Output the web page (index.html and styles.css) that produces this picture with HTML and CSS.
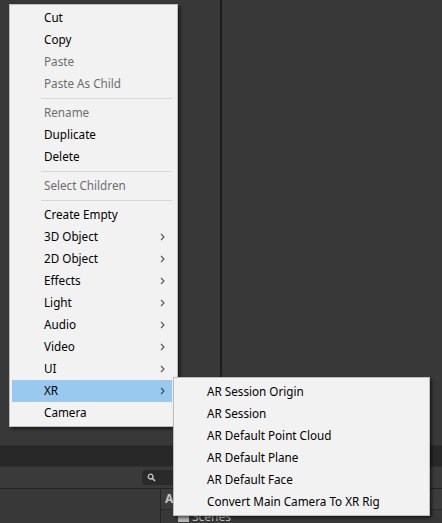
FILE: index.html
```html
<!DOCTYPE html>
<html>
<head>
<meta charset="utf-8">
<link rel="stylesheet" href="styles.css">
</head>
<body>
<div class="editor">
  <div class="top">
    <div class="pane-left"></div>
    <div class="pane-right"></div>
  </div>
  <div class="band"></div>
  <div class="toolbar">
    <div class="search">
      <svg width="10" height="10" viewBox="0 0 10 10"><circle cx="3.6" cy="3.6" r="2.4" fill="none" stroke="#c8c8c8" stroke-width="1.3"/><line x1="5.4" y1="5.4" x2="8" y2="8" stroke="#c8c8c8" stroke-width="1.6"/></svg>
    </div>
  </div>
  <div class="panel">
    <div class="panel-left"></div>
    <div class="panel-right">
      <div class="panel-head">Assets</div>
      <div class="folder-row"><span class="folder"></span>Scenes</div>
    </div>
  </div>
</div>

<div class="menu main-menu">
  <div class="item">Cut</div>
  <div class="item">Copy</div>
  <div class="item disabled">Paste</div>
  <div class="item disabled">Paste As Child</div>
  <div class="sep"></div>
  <div class="item disabled">Rename</div>
  <div class="item">Duplicate</div>
  <div class="item">Delete</div>
  <div class="sep"></div>
  <div class="item disabled">Select Children</div>
  <div class="sep"></div>
  <div class="item">Create Empty</div>
  <div class="item sub">3D Object<svg class="chev" width="5" height="8" viewBox="0 0 5 8"><polyline points="1,1 4,4 1,7" fill="none" stroke="#555" stroke-width="1.1"/></svg></div>
  <div class="item sub">2D Object<svg class="chev" width="5" height="8" viewBox="0 0 5 8"><polyline points="1,1 4,4 1,7" fill="none" stroke="#555" stroke-width="1.1"/></svg></div>
  <div class="item sub">Effects<svg class="chev" width="5" height="8" viewBox="0 0 5 8"><polyline points="1,1 4,4 1,7" fill="none" stroke="#555" stroke-width="1.1"/></svg></div>
  <div class="item sub">Light<svg class="chev" width="5" height="8" viewBox="0 0 5 8"><polyline points="1,1 4,4 1,7" fill="none" stroke="#555" stroke-width="1.1"/></svg></div>
  <div class="item sub">Audio<svg class="chev" width="5" height="8" viewBox="0 0 5 8"><polyline points="1,1 4,4 1,7" fill="none" stroke="#555" stroke-width="1.1"/></svg></div>
  <div class="item sub">Video<svg class="chev" width="5" height="8" viewBox="0 0 5 8"><polyline points="1,1 4,4 1,7" fill="none" stroke="#555" stroke-width="1.1"/></svg></div>
  <div class="item sub">UI<svg class="chev" width="5" height="8" viewBox="0 0 5 8"><polyline points="1,1 4,4 1,7" fill="none" stroke="#555" stroke-width="1.1"/></svg></div>
  <div class="item sub active">XR<svg class="chev" width="5" height="8" viewBox="0 0 5 8"><polyline points="1,1 4,4 1,7" fill="none" stroke="#444" stroke-width="1.1"/></svg></div>
  <div class="item">Camera</div>
</div>

<div class="menu sub-menu">
  <div class="item">AR Session Origin</div>
  <div class="item">AR Session</div>
  <div class="item">AR Default Point Cloud</div>
  <div class="item">AR Default Plane</div>
  <div class="item">AR Default Face</div>
  <div class="item">Convert Main Camera To XR Rig</div>
</div>
</body>
</html>
```

FILE: styles.css
```css
html, body {
  margin: 0;
  padding: 0;
  background: #383838;
  width: 442px;
  height: 523px;
  overflow: hidden;
  font-family: "Noto Sans", "Open Sans", sans-serif;
}

.editor {
  display: flex;
  flex-direction: column;
  width: 442px;
  height: 523px;
}

.top {
  display: flex;
  height: 445px;
  flex: none;
}

.pane-left {
  width: 220px;
  background: #383838;
  border-right: 2px solid #1c1c1c;
}

.pane-right {
  flex: 1;
  background: #383838;
}

.band {
  height: 20px;
  flex: none;
  background: #282828;
  border-top: 1px solid #2e2e2e;
}

.toolbar {
  height: 21px;
  flex: none;
  background: #3a3a3a;
  border-top: 1px solid #303030;
  border-bottom: 1px solid #252525;
  display: flex;
  align-items: center;
  padding-left: 142px;
}

.search {
  width: 120px;
  height: 15px;
  background: #2a2a2a;
  border-radius: 4px;
  display: flex;
  align-items: center;
  padding-left: 5px;
}

.panel {
  flex: 1;
  display: flex;
  background: #383838;
}

.panel-left {
  width: 160px;
  border-right: 1px solid #242424;
}

.panel-right {
  flex: 1;
  display: flex;
  flex-direction: column;
}

.panel-head {
  height: 20px;
  line-height: 20px;
  padding-left: 4px;
  color: #c4c4c4;
  font-weight: bold;
  font-size: 12px;
  background: #3c3c3c;
  border-bottom: 1px solid #2a2a2a;
}

.folder-row {
  display: flex;
  align-items: flex-start;
  padding-left: 17px;
  color: #c4c4c4;
  font-size: 12px;
  line-height: 14px;
  height: 14px;
}

.folder {
  width: 11px;
  height: 8px;
  margin-top: 4px;
  background: #b8b8b8;
  margin-right: 3px;
}

.menu {
  position: absolute;
  background: #f2f2f2;
  border: 1px solid #bdbdbd;
  box-sizing: border-box;
  box-shadow: 2px 2px 3px rgba(0, 0, 0, 0.55);
  font-size: 11.7px;
  color: #000;
}

.main-menu {
  left: 9px;
  top: 4px;
  width: 169px;
  height: 423px;
  padding: 2px 5px 0 2px;
}

.sub-menu {
  left: 173px;
  top: 377px;
  width: 257px;
  height: 139px;
  padding: 3px 4px 0 2px;
}

.item {
  height: 22px;
  box-sizing: border-box;
  line-height: 20px;
  padding-bottom: 2px;
  padding-left: 32px;
  position: relative;
  white-space: nowrap;
}

.sub-menu .item {
  padding-left: 31px;
}

.item.disabled {
  color: #6d6d6d;
}

.item.active {
  background: #99c9ef;
}

.chev {
  position: absolute;
  right: 7px;
  top: 7px;
}

.sep {
  height: 1px;
  background: #d7d7d7;
  margin: 3px 0 3px 29px;
}
```
